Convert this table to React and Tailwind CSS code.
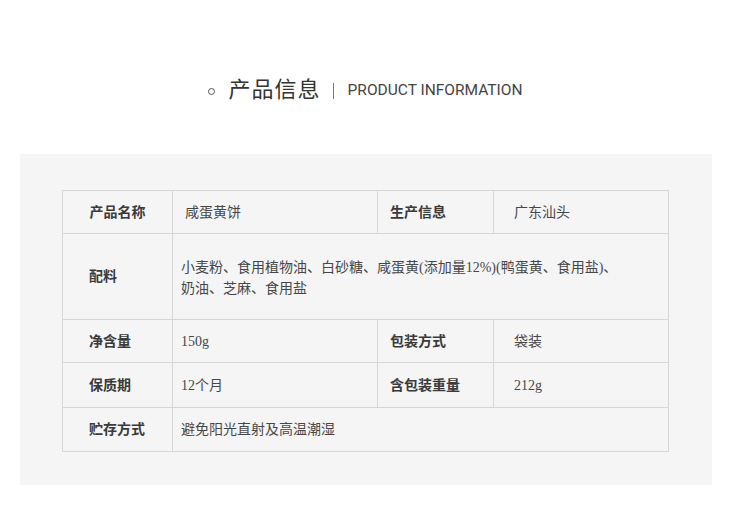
import React from "react";

const cjk = { fontFamily: '"Liberation Serif", "Noto Sans CJK SC", serif' };

function Label({ children, center }) {
  return (
    <td
      className={`border border-[#d6d6d6] text-[14px] font-bold text-[#3a3a3a] ${
        center ? "text-center" : "pl-[26px]"
      }`}
    >
      {children}
    </td>
  );
}

function Value({ children, pl = "pl-[8px]", colSpan }) {
  return (
    <td colSpan={colSpan} className={`border border-[#d6d6d6] text-[14px] text-[#474747] ${pl}`}>
      {children}
    </td>
  );
}

export default function App() {
  return (
    <div className="w-[730px] h-[523px] bg-white overflow-hidden" style={cjk}>
      {/* title */}
      <div className="h-[154px] flex items-start justify-center pt-[75px]">
        <div className="flex items-center">
          <span className="w-[7px] h-[7px] rounded-full border-[1.5px] border-[#555] mr-[14px] mt-[4px]" />
          <span className="text-[22px] leading-[28px] text-[#333] tracking-[1px]">产品信息</span>
          <span className="w-px h-[16px] bg-[#777] ml-[12px] mr-[14px] mt-[2px]" />
          <span
            className="text-[15.5px] leading-[28px] text-[#444] mt-[1px]"
            style={{ fontFamily: 'Roboto, "Liberation Sans", sans-serif' }}
          >
            PRODUCT INFORMATION
          </span>
        </div>
      </div>

      {/* panel */}
      <div className="ml-[20px] w-[692px] h-[331px] bg-[#f5f5f5] pt-[36px] pl-[42px]">
        <table className="table-fixed border-collapse w-[606px]">
          <colgroup>
            <col className="w-[110px]" />
            <col className="w-[205px]" />
            <col className="w-[116px]" />
            <col className="w-[175px]" />
          </colgroup>
          <tbody>
            <tr className="h-[43px]">
              <Label center>产品名称</Label>
              <Value pl="pl-[12px]">咸蛋黄饼</Value>
              <Label>
                <span className="-ml-[14px]">生产信息</span>
              </Label>
              <Value pl="pl-[20px]">广东汕头</Value>
            </tr>
            <tr className="h-[86px]">
              <Label>配料</Label>
              <td colSpan={3} className="border border-[#d6d6d6] text-[14px] leading-[21px] text-[#474747] pl-[8px] pt-[2px]">
                <span className="whitespace-nowrap">小麦粉、食用植物油、白砂糖、咸蛋黄(添加量12%)(鸭蛋黄、食用盐)、</span>
                <br />
                奶油、芝麻、食用盐
              </td>
            </tr>
            <tr className="h-[43px]">
              <Label>净含量</Label>
              <Value>150g</Value>
              <Label>
                <span className="-ml-[14px]">包装方式</span>
              </Label>
              <Value pl="pl-[20px]">袋装</Value>
            </tr>
            <tr className="h-[45px]">
              <Label>保质期</Label>
              <Value>12个月</Value>
              <Label>
                <span className="-ml-[14px]">含包装重量</span>
              </Label>
              <Value pl="pl-[20px]">212g</Value>
            </tr>
            <tr className="h-[44px]">
              <Label>贮存方式</Label>
              <Value colSpan={3}>避免阳光直射及高温潮湿</Value>
            </tr>
          </tbody>
        </table>
      </div>
    </div>
  );
}
